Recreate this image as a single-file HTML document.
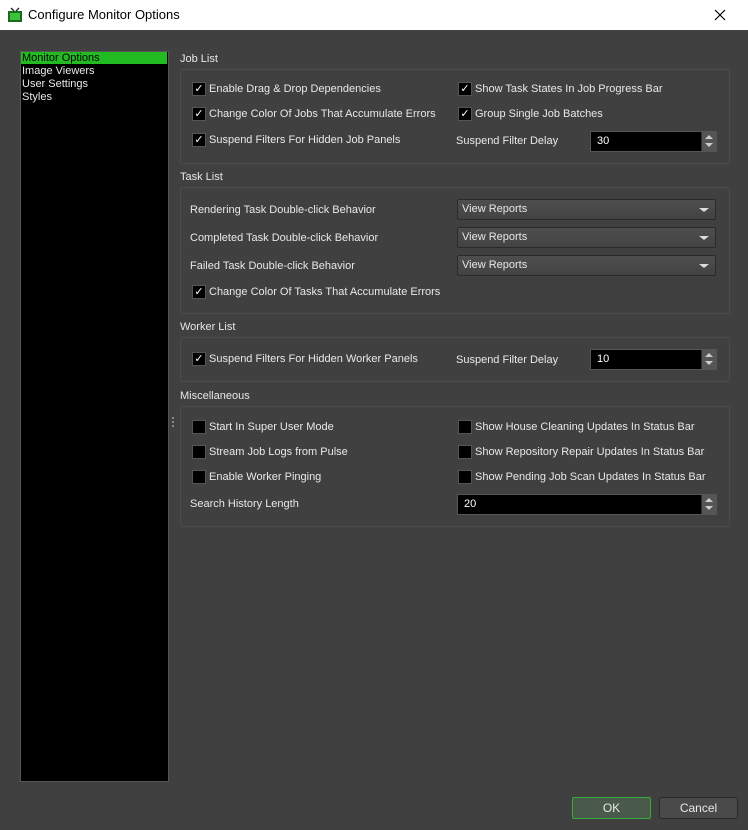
<html><head><style>
body{margin:0;width:748px;height:830px;background:#404040;font-family:"Liberation Sans",sans-serif;font-size:11px;color:#e8e8e8;position:relative;overflow:hidden}
.a{position:absolute;white-space:nowrap}
.t{position:absolute;white-space:nowrap;line-height:14px}
.cb{position:absolute;width:12px;height:12px;background:#000;border:1px solid #555;color:#fff;font-size:11px;line-height:12px;text-align:center}
.box{position:absolute;border:1px solid #4c4c4c;border-radius:2px;left:180px;width:548px}
.spin{position:absolute;background:#000;border:1px solid #555;height:19px;color:#fff}
.spin span{position:absolute;left:6px;top:3px}
.sb{position:absolute;right:0;top:0;width:14px;height:19px;background:#555;border-left:1px solid #333}
.sb:before{content:"";position:absolute;left:3px;top:3px;border:4px solid transparent;border-bottom:4px solid #ccc;border-top:0}
.sb:after{content:"";position:absolute;left:3px;top:11px;border:4px solid transparent;border-top:4px solid #ccc;border-bottom:0}
.combo{position:absolute;left:457px;width:257px;height:19px;background:linear-gradient(#4e4e4e,#434343);border:1px solid #2a2a2a;border-radius:2px}
.combo span{position:absolute;left:4px;top:3px}
.combo:after{content:"";position:absolute;right:6px;top:8px;border:5px solid transparent;border-top:4px solid #ddd;border-bottom:0}
.btn{position:absolute;top:797px;height:20px;border-radius:2px;text-align:center;line-height:20px;font-size:12px}
</style></head><body>
<div class="a" style="left:0;top:0;width:748px;height:30px;background:#fff;color:#000"></div>
<svg class="a" style="left:7px;top:7px" width="16" height="16"><path d="M4 1L7 4M12 1L9 4" stroke="#222" stroke-width="1.3"/><rect x="1" y="4" width="14" height="11" fill="#1a6b1a"/><rect x="3" y="6" width="10" height="7" fill="#3ec23e"/></svg>
<div class="a" style="left:28px;top:7px;color:#000;font-size:13px">Configure Monitor Options</div>
<svg class="a" style="left:714px;top:9px" width="12" height="12"><path d="M1 1L11 11M11 1L1 11" stroke="#000" stroke-width="1.2"/></svg>

<div class="a" style="left:20px;top:51px;width:147px;height:729px;background:#000;border:1px solid #555"></div>
<div class="a" style="left:21px;top:52px;width:146px;height:12px;background:#22bb22"></div>
<div class="t" style="left:22px;top:51px;color:#000">Monitor Options</div>
<div class="t" style="left:22px;top:64px">Image Viewers</div>
<div class="t" style="left:22px;top:77px">User Settings</div>
<div class="t" style="left:22px;top:90px">Styles</div>
<div class="a" style="left:172px;top:417px;width:2px;height:10px;border-left:2px dotted #888"></div>

<div class="t" style="left:180px;top:52px">Job List</div>
<div class="box" style="top:69px;height:93px"></div>
<div class="cb" style="left:192px;top:82px">✓</div><div class="t" style="left:209px;top:82px">Enable Drag &amp; Drop Dependencies</div>
<div class="cb" style="left:192px;top:107px">✓</div><div class="t" style="left:209px;top:107px">Change Color Of Jobs That Accumulate Errors</div>
<div class="cb" style="left:192px;top:133px">✓</div><div class="t" style="left:209px;top:133px">Suspend Filters For Hidden Job Panels</div>
<div class="cb" style="left:458px;top:82px">✓</div><div class="t" style="left:475px;top:82px">Show Task States In Job Progress Bar</div>
<div class="cb" style="left:458px;top:107px">✓</div><div class="t" style="left:475px;top:107px">Group Single Job Batches</div>
<div class="t" style="left:456px;top:134px">Suspend Filter Delay</div>
<div class="spin" style="left:590px;top:131px;width:125px"><span>30</span><div class="sb"></div></div>

<div class="t" style="left:180px;top:170px">Task List</div>
<div class="box" style="top:187px;height:125px"></div>
<div class="t" style="left:190px;top:203px">Rendering Task Double-click Behavior</div>
<div class="t" style="left:190px;top:231px">Completed Task Double-click Behavior</div>
<div class="t" style="left:190px;top:259px">Failed Task Double-click Behavior</div>
<div class="combo" style="top:199px"><span>View Reports</span></div>
<div class="combo" style="top:227px"><span>View Reports</span></div>
<div class="combo" style="top:255px"><span>View Reports</span></div>
<div class="cb" style="left:192px;top:285px">✓</div><div class="t" style="left:209px;top:285px">Change Color Of Tasks That Accumulate Errors</div>

<div class="t" style="left:180px;top:320px">Worker List</div>
<div class="box" style="top:337px;height:43px"></div>
<div class="cb" style="left:192px;top:352px">✓</div><div class="t" style="left:209px;top:352px">Suspend Filters For Hidden Worker Panels</div>
<div class="t" style="left:456px;top:353px">Suspend Filter Delay</div>
<div class="spin" style="left:590px;top:349px;width:125px"><span>10</span><div class="sb"></div></div>

<div class="t" style="left:180px;top:389px">Miscellaneous</div>
<div class="box" style="top:406px;height:119px"></div>
<div class="cb" style="left:192px;top:420px"></div><div class="t" style="left:209px;top:420px">Start In Super User Mode</div>
<div class="cb" style="left:192px;top:445px"></div><div class="t" style="left:209px;top:445px">Stream Job Logs from Pulse</div>
<div class="cb" style="left:192px;top:470px"></div><div class="t" style="left:209px;top:470px">Enable Worker Pinging</div>
<div class="cb" style="left:458px;top:420px"></div><div class="t" style="left:475px;top:420px">Show House Cleaning Updates In Status Bar</div>
<div class="cb" style="left:458px;top:445px"></div><div class="t" style="left:475px;top:445px">Show Repository Repair Updates In Status Bar</div>
<div class="cb" style="left:458px;top:470px"></div><div class="t" style="left:475px;top:470px">Show Pending Job Scan Updates In Status Bar</div>
<div class="t" style="left:190px;top:497px">Search History Length</div>
<div class="spin" style="left:457px;top:494px;width:258px"><span>20</span><div class="sb"></div></div>

<div class="btn" style="left:572px;width:77px;background:#4a5a4a;border:1px solid #3aaa3a">OK</div>
<div class="btn" style="left:659px;width:77px;background:#4a4a4a;border:1px solid #2a2a2a">Cancel</div>
</body></html>
